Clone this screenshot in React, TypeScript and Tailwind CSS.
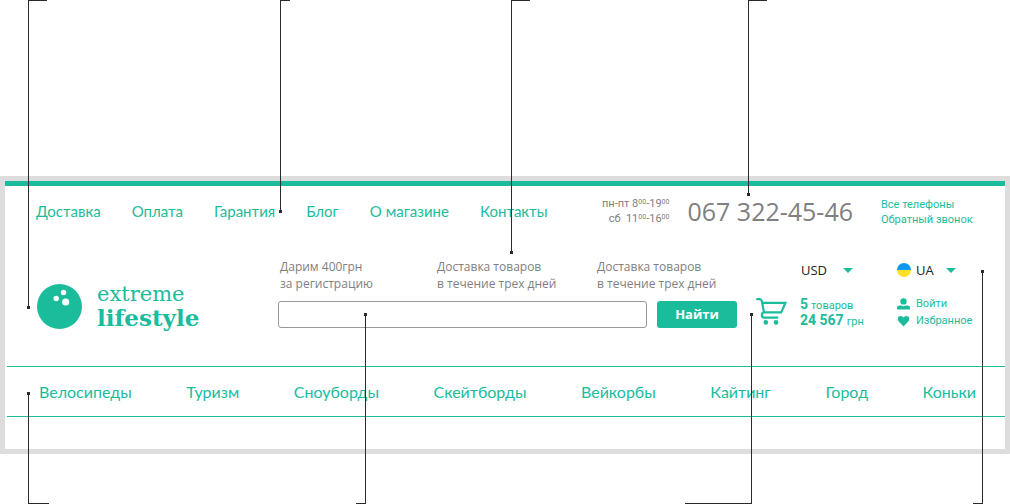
import type { ReactNode } from 'react'

const topLinks = ['Доставка', 'Оплата', 'Гарантия', 'Блог', 'О магазине', 'Контакты']

const categories = ['Велосипеды', 'Туризм', 'Сноуборды', 'Скейтборды', 'Вейкорбы', 'Кайтинг', 'Город', 'Коньки']

const promos = [
  ['Дарим 400грн', 'за регистрацию'],
  ['Доставка товаров', 'в течение трех дней'],
  ['Доставка товаров', 'в течение трех дней']
]

// Callout lines that run from a header block to the edge of the page
const callouts = [
  { line: 'left-[28px] top-0 h-[308px] w-[19px] border-l border-t', dot: '-left-[2px] -bottom-px' },
  { line: 'left-[280px] top-0 h-[212px] w-[10px] border-l border-t', dot: '-left-[2px] -bottom-px' },
  { line: 'left-[511px] top-0 h-[253px] w-[19px] border-l border-t', dot: '-left-[2px] -bottom-px' },
  { line: 'left-[748px] top-0 h-[195px] w-[19px] border-l border-t', dot: '-left-[2px] -bottom-px' },
  { line: 'left-[28px] bottom-0 h-[111px] w-[21px] border-l border-b', dot: '-left-[2px] -top-px' },
  { line: 'left-[356px] bottom-0 h-[190px] w-[10px] border-r border-b', dot: '-right-[2px] -top-px' },
  { line: 'left-[685px] bottom-0 h-[190px] w-[67px] border-r border-b', dot: '-right-[2px] -top-px' },
  { line: 'left-[973px] bottom-0 h-[233px] w-[10px] border-r border-b', dot: '-right-[2px] -top-px' }
]

function Logo() {
  return (
    <a href="#" className="flex items-center gap-[15px] text-[#1abc9c]">
      <svg width="45" height="45" viewBox="0 0 45 45" aria-hidden="true">
        <circle cx="22.5" cy="22.5" r="22.5" fill="#1abc9c" />
        <circle cx="26.5" cy="8.5" r="2.7" fill="#fff" />
        <circle cx="19.2" cy="14.5" r="2.7" fill="#fff" />
        <circle cx="28.7" cy="18" r="3.6" fill="#fff" />
      </svg>
      <span className="flex flex-col font-['DejaVu_Serif',serif] text-[21px] leading-[23px]">
        <span>extreme</span>
        <strong className="text-[23px]">lifestyle</strong>
      </span>
    </a>
  )
}

function CartIcon() {
  return (
    <svg width="32" height="28" viewBox="0 0 32 28" fill="none" stroke="#1abc9c" strokeWidth="2.2" aria-hidden="true">
      <path d="M0.3 1.2H3.6Q5.4 1.2 5.8 3L8 14.4" />
      <path d="M6.2 4.9H29.4L25.2 14.4H8Q5.8 15 5.8 17.1Q5.8 19.7 8.4 19.7H22.2" />
      <circle cx="9.8" cy="24.4" r="2.3" fill="#1abc9c" stroke="none" />
      <circle cx="20" cy="24.4" r="2.3" fill="#1abc9c" stroke="none" />
    </svg>
  )
}

function Arrow() {
  return (
    <svg width="10" height="5" viewBox="0 0 10 5" className="pointer-events-none shrink-0" aria-hidden="true">
      <path d="M0 0H10L5 5Z" fill="#1abc9c" />
    </svg>
  )
}

function AccountLink({ icon, children }: { icon: ReactNode; children: ReactNode }) {
  return (
    <a href="#" className="flex items-center gap-[6px] whitespace-nowrap font-['Roboto','Open_Sans',sans-serif] text-[11px] leading-[17px]">
      {icon}
      {children}
    </a>
  )
}

export default function App() {
  return (
    <div className="relative bg-white pt-[176px] pb-[50px] font-['Open_Sans','Noto_Sans',sans-serif] text-[#808080]">
      <header className="border-[5px] border-[#ddd] bg-white">
        <div className="border-t-[5px] border-t-[#1abc9c] pb-8">
          {/* Top bar */}
          <div className="flex h-[50px] items-center pl-[31px] pr-[34px]">
            <nav className="mr-auto flex gap-[31px] font-['Lato','Open_Sans',sans-serif] text-[15px] leading-5 text-[#1abc9c]">
              {topLinks.map((item) => (
                <a key={item} href="#" className="whitespace-nowrap">
                  {item}
                </a>
              ))}
            </nav>
            <div className="mr-[18px] whitespace-nowrap text-right font-['Roboto','Open_Sans',sans-serif] text-[11px] leading-[15px]">
              <p>
                пн-пт 8<sup className="text-[7px]">00</sup>-19<sup className="text-[7px]">00</sup>
              </p>
              <p>
                сб&nbsp; 11<sup className="text-[7px]">00</sup>-16<sup className="text-[7px]">00</sup>
              </p>
            </div>
            <a href="tel:0673224546" className="mr-[28px] whitespace-nowrap text-[25px] leading-8">
              067 322-45-46
            </a>
            <div className="flex w-[90px] flex-col whitespace-nowrap pt-[2px] font-['Roboto','Open_Sans',sans-serif] text-[11px] leading-[15px] text-[#1abc9c]">
              <a href="#">Все телефоны</a>
              <a href="#">Обратный звонок</a>
            </div>
          </div>

          {/* Logo, search, cart, account */}
          <div className="flex pt-[22px] pb-[37px] pl-8 pr-[34px]">
            <div className="w-[241px] pt-[25px]">
              <Logo />
            </div>

            <div className="min-w-0 flex-1">
              <div className="grid grid-cols-[157px_160px_1fr] pl-[2px] text-[12px] leading-[17px]">
                {promos.map(([first, second], i) => (
                  <p key={i} className="whitespace-nowrap">
                    {first}
                    <br />
                    {second}
                  </p>
                ))}
              </div>
              <form className="mt-[9px] flex gap-[10px]" onSubmit={(e) => e.preventDefault()}>
                <input
                  type="search"
                  aria-label="Поиск"
                  className="h-[27px] min-w-0 flex-1 rounded-[3px] border border-[#999] px-2 text-[13px] outline-none"
                />
                <button type="submit" className="h-[27px] w-20 rounded-[3px] bg-[#1abc9c] text-[13px] font-bold text-white">
                  Найти
                </button>
              </form>
            </div>

            <div className="ml-[19px] w-[141px]">
              <div className="flex h-6 items-center pl-[45px] text-[#222]">
                <select aria-label="Валюта" className="w-[42px] appearance-none bg-transparent text-[13px] leading-5 outline-none">
                  <option>USD</option>
                  <option>UAH</option>
                </select>
                <Arrow />
              </div>
              <a href="#" className="mt-[14px] flex gap-3 text-[#1abc9c]">
                <span className="pt-[2px]">
                  <CartIcon />
                </span>
                <span className="flex flex-col whitespace-nowrap font-['Roboto','Open_Sans',sans-serif] text-[11px] leading-4">
                  <span className="flex h-4 items-baseline gap-[3px]">
                    <b className="text-[14px]">5</b>
                    <span>товаров</span>
                  </span>
                  <span className="flex h-4 items-baseline gap-[3px]">
                    <b className="text-[14px]">24 567</b>
                    <span>грн</span>
                  </span>
                </span>
              </a>
            </div>

            <div className="w-[74px]">
              <div className="flex h-6 items-center text-[#222]">
                <svg width="14" height="14" viewBox="0 0 14 14" className="mr-[5px] shrink-0" aria-hidden="true">
                  <path d="M0 7A7 7 0 0 1 14 7Z" fill="#0d99f2" />
                  <path d="M0 7A7 7 0 0 0 14 7Z" fill="#ffdf29" />
                </svg>
                <select aria-label="Язык" className="w-[30px] appearance-none bg-transparent text-[13px] leading-5 outline-none">
                  <option>UA</option>
                  <option>RU</option>
                </select>
                <Arrow />
              </div>
              <div className="mt-[13px] flex flex-col text-[#1abc9c]">
                <AccountLink
                  icon={
                    <svg width="13" height="12" viewBox="0 0 13 12" fill="currentColor" className="shrink-0" aria-hidden="true">
                      <circle cx="6.5" cy="3.4" r="3.2" />
                      <path d="M0 11.5V9.6Q0 7.4 2.4 7.4H4L6.5 8.2L9 7.4H10.6Q13 7.4 13 9.6V11.5Z" />
                    </svg>
                  }
                >
                  Войти
                </AccountLink>
                <AccountLink
                  icon={
                    <svg width="13" height="12" viewBox="0 0 13 12" fill="currentColor" className="shrink-0" aria-hidden="true">
                      <path d="M6.5 11.4L2 6.8C-0.4 4.2 1 1 3.6 1C5 1 6 1.8 6.5 2.8C7 1.8 8 1 9.4 1C12 1 13.4 4.2 11 6.8Z" />
                    </svg>
                  }
                >
                  Избранное
                </AccountLink>
              </div>
            </div>
          </div>

          {/* Categories */}
          <nav className="ml-[2px] flex h-[51px] items-center justify-between border-y border-y-[#1abc9c] pl-8 pr-[29px] font-['Lato','Open_Sans',sans-serif] text-[16px] leading-6 text-[#1abc9c]">
            {categories.map((item) => (
              <a key={item} href="#" className="whitespace-nowrap">
                {item}
              </a>
            ))}
          </nav>
        </div>
      </header>

      {callouts.map((c) => (
        <span key={c.line} className={`pointer-events-none absolute border-[#2b2b2b] ${c.line}`}>
          <span className={`absolute size-[3px] bg-[#2b2b2b] ${c.dot}`} />
        </span>
      ))}
    </div>
  )
}
